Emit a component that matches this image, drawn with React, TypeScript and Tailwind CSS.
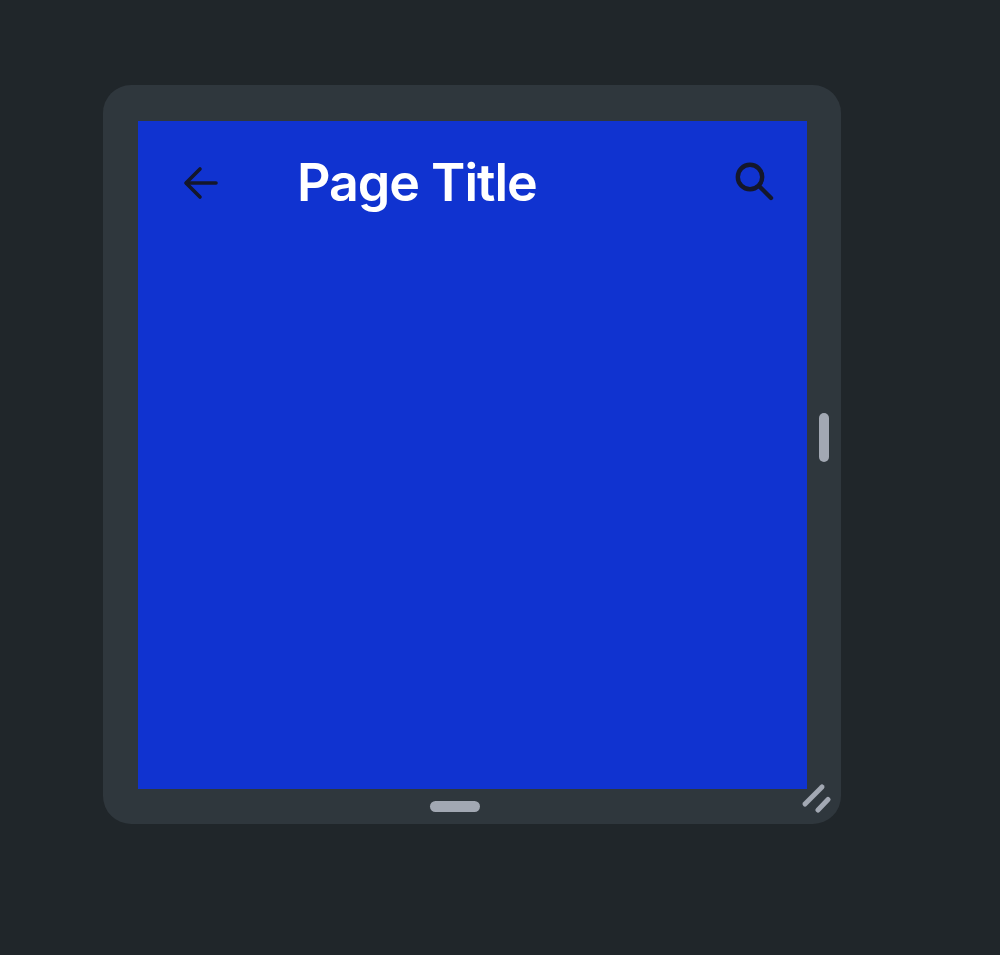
export default function App() {
  return (
    <div className="h-[955px] w-full bg-[#20262a] pl-[103px] pt-[85px] font-['Inter',sans-serif]">
      <div className="relative h-[739px] w-[738px] rounded-[28px] bg-[#2f373d] pl-[35px] pt-[36px]">
        <div className="h-[668px] w-[669px] bg-[#1033d0] text-white">
          <div className="flex h-[124px] items-center pl-[44px] pr-[32px]">
            <svg width="38" height="38" viewBox="0 0 38 38" fill="none" stroke="#14172b" strokeWidth="3.6" strokeLinecap="round" strokeLinejoin="round" className="shrink-0">
              <path d="M34 19H4.5" />
              <path d="M18 5 4 19 18 33" />
            </svg>
            <h1 className="ml-[77px] text-[52px] font-semibold leading-[60px] tracking-[-0.02em]">Page Title</h1>
            <svg width="42" height="42" viewBox="0 0 42 42" fill="none" stroke="#14172b" strokeWidth="4.4" strokeLinecap="round" className="ml-auto shrink-0">
              <circle cx="17" cy="15" r="12.2" />
              <path d="M27 25 38 36" />
            </svg>
          </div>
        </div>
        <div className="absolute right-[12px] top-[328px] h-[49px] w-[10px] rounded-full bg-[#a2a8b3]" />
        <div className="absolute bottom-[12px] left-[327px] h-[11px] w-[50px] rounded-full bg-[#a2a8b3]" />
        <svg width="30" height="30" viewBox="0 0 30 30" fill="none" stroke="#a2a8b3" strokeWidth="5" strokeLinecap="round" className="absolute bottom-[11px] right-[10px]">
          <path d="M4 21 21 4" />
          <path d="M17 27 27 16.5" />
        </svg>
      </div>
    </div>
  );
}
